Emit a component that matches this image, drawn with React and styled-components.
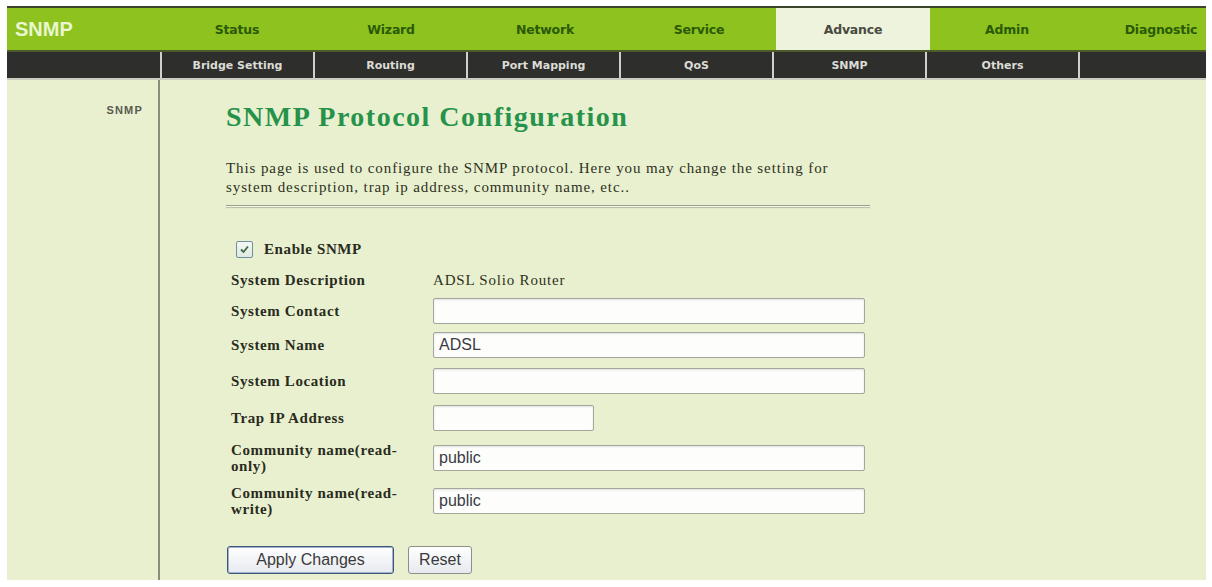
import React from 'react';
import styled, { createGlobalStyle } from 'styled-components';

const GlobalStyle = createGlobalStyle`
  html, body {
    margin: 0;
    padding: 0;
    background: #ffffff;
  }
  body {
    padding: 6px 6px 0 7px;
    font-family: "Liberation Serif", "Times New Roman", serif;
  }
`;

const Page = styled.div`
  width: 1199px;
  display: flex;
  flex-direction: column;
`;

const TopBar = styled.div`
  display: flex;
  height: 42px;
  border-top: 2px solid #3b4529;
  border-bottom: 2px solid #4c5a2c;
  background: #8dc21f;
  overflow: hidden;
`;

const Logo = styled.div`
  width: 153px;
  flex-shrink: 0;
  display: flex;
  align-items: center;
  padding-left: 8px;
  box-sizing: border-box;
  font-family: "Liberation Sans", Arial, sans-serif;
  font-weight: bold;
  font-size: 20px;
  color: #eaf6cf;
`;

const Tab = styled.div`
  width: 154px;
  flex-shrink: 0;
  display: flex;
  align-items: center;
  justify-content: center;
  font-family: "DejaVu Sans", Verdana, sans-serif;
  font-weight: bold;
  font-size: 12.5px;
  letter-spacing: -0.2px;
  color: ${(p) => (p.active ? '#4a4a40' : '#2b5a06')};
  background: ${(p) => (p.active ? '#edf3dc' : 'transparent')};
`;

const SubBar = styled.div`
  display: flex;
  height: 26px;
  background: #2e2e2c;
  border-bottom: 2px solid #c9cdc0;
`;

const SubTab = styled.div`
  width: ${(p) => p.w || 153}px;
  flex-shrink: 0;
  box-sizing: border-box;
  display: flex;
  align-items: center;
  justify-content: center;
  border-left: ${(p) => (p.first ? 'none' : '2px solid #cfd1c8')};
  font-family: "DejaVu Sans", Verdana, sans-serif;
  font-weight: bold;
  font-size: 11px;
  color: #dcdcd6;
`;

const Body = styled.div`
  display: flex;
  height: 500px;
  background: #e8f0d0;
`;

const Sidebar = styled.div`
  width: 153px;
  flex-shrink: 0;
  border-right: 2px solid #8a8c7c;
  display: flex;
  justify-content: flex-end;
  padding: 24px 15px 0 0;
  box-sizing: border-box;
`;

const SideLink = styled.div`
  font-family: "Liberation Sans", Arial, sans-serif;
  font-weight: bold;
  font-size: 11px;
  letter-spacing: 1.2px;
  color: #5a5a50;
`;

const Main = styled.div`
  flex: 1;
  padding: 20px 0 0 66px;
`;

const Title = styled.h1`
  margin: 0;
  font-family: "Liberation Serif", "Times New Roman", serif;
  font-weight: bold;
  font-size: 28px;
  letter-spacing: 1.5px;
  line-height: 34px;
  color: #27934a;
`;

const Intro = styled.p`
  margin: 25px 0 0 0;
  width: 630px;
  font-size: 15px;
  letter-spacing: 0.9px;
  line-height: 19px;
  color: #2f3020;
`;

const Rule = styled.div`
  width: 644px;
  height: 1px;
  margin-top: 8px;
  background: #9c9e8e;
  border-bottom: 1px solid #f4f6ec;
  box-shadow: 0 1px 1px rgba(90, 95, 70, 0.35);
`;

const Form = styled.div`
  margin-top: 26px;
  display: flex;
  flex-direction: column;
`;

const Row = styled.div`
  display: flex;
  align-items: center;
  height: ${(p) => p.h}px;
`;

const Label = styled.div`
  width: 207px;
  flex-shrink: 0;
  padding: 0 14px 0 5px;
  box-sizing: border-box;
  font-weight: bold;
  font-size: 15px;
  letter-spacing: 0.6px;
  line-height: 16px;
  color: #2a2b1c;
`;

const Value = styled.div`
  font-size: 15px;
  letter-spacing: 0.8px;
  color: #2f3020;
`;

const Input = styled.input`
  width: ${(p) => p.w}px;
  height: 26px;
  box-sizing: border-box;
  margin: 0;
  padding: 0 5px;
  border: 1px solid #a4a79c;
  border-radius: 2px;
  box-shadow: inset 0 1px 2px rgba(0, 0, 0, 0.12);
  background: #fdfefb;
  font-family: "Liberation Sans", Arial, sans-serif;
  font-size: 16px;
  color: #3a3a44;
  outline: none;
`;

const CheckLine = styled.label`
  display: flex;
  align-items: center;
  gap: 11px;
  padding-left: 10px;
  font-weight: bold;
  font-size: 15px;
  letter-spacing: 0.6px;
  color: #2a2b1c;
`;

const Box = styled.span`
  width: 17px;
  height: 17px;
  box-sizing: border-box;
  border: 1px solid #6f8fa0;
  border-radius: 2px;
  background: linear-gradient(#f4f8f4, #dfe9e2);
  display: flex;
  align-items: center;
  justify-content: center;
`;

const Buttons = styled.div`
  display: flex;
  gap: 14px;
  margin-top: 23px;
  margin-left: 1px;
`;

const Button = styled.button`
  width: ${(p) => p.w}px;
  height: 28px;
  margin: 0;
  border: 1px solid ${(p) => (p.primary ? '#3f5578' : '#8d8f88')};
  border-radius: 3px;
  box-shadow: ${(p) => (p.primary ? 'inset 0 0 0 1px #9fb2d0' : 'none')};
  background: linear-gradient(#ffffff, #e6e9ee);
  font-family: "Liberation Sans", Arial, sans-serif;
  font-size: 16px;
  color: #3a3a3a;
`;

const tabs = ['Status', 'Wizard', 'Network', 'Service', 'Advance', 'Admin', 'Diagnostic'];
const subTabs = ['Bridge Setting', 'Routing', 'Port Mapping', 'QoS', 'SNMP', 'Others'];

const App = () => (
  <>
    <GlobalStyle />
    <Page>
      <TopBar>
        <Logo>SNMP</Logo>
        {tabs.map((t) => (
          <Tab key={t} active={t === 'Advance'}>{t}</Tab>
        ))}
      </TopBar>
      <SubBar>
        <SubTab first />
        {subTabs.map((t) => (
          <SubTab key={t}>{t}</SubTab>
        ))}
        <SubTab w={128} />
      </SubBar>
      <Body>
        <Sidebar>
          <SideLink>SNMP</SideLink>
        </Sidebar>
        <Main>
          <Title>SNMP Protocol Configuration</Title>
          <Intro>
            This page is used to configure the SNMP protocol. Here you may change the setting for
            system description, trap ip address, community name, etc..
          </Intro>
          <Rule />
          <Form>
            <Row h={32}>
              <CheckLine>
                <Box>
                  <svg width="11" height="11" viewBox="0 0 11 11">
                    <path d="M2 5.5 L4.5 8 L9 2.5" fill="none" stroke="#3b6a4a" strokeWidth="1.8" />
                  </svg>
                </Box>
                Enable SNMP
              </CheckLine>
            </Row>
            <Row h={30}>
              <Label>System Description</Label>
              <Value>ADSL Solio Router</Value>
            </Row>
            <Row h={32}>
              <Label>System Contact</Label>
              <Input w={432} defaultValue="" />
            </Row>
            <Row h={36}>
              <Label>System Name</Label>
              <Input w={432} defaultValue="ADSL" />
            </Row>
            <Row h={36}>
              <Label>System Location</Label>
              <Input w={432} defaultValue="" />
            </Row>
            <Row h={38}>
              <Label>Trap IP Address</Label>
              <Input w={161} defaultValue="" />
            </Row>
            <Row h={42}>
              <Label>Community name(read-only)</Label>
              <Input w={432} defaultValue="public" />
            </Row>
            <Row h={44}>
              <Label>Community name(read-write)</Label>
              <Input w={432} defaultValue="public" />
            </Row>
          </Form>
          <Buttons>
            <Button primary w={167}>Apply Changes</Button>
            <Button w={64}>Reset</Button>
          </Buttons>
        </Main>
      </Body>
    </Page>
  </>
);

export default App;
